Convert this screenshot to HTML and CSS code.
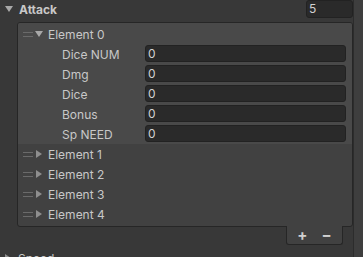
FILE: index.html
```html
<!DOCTYPE html>
<html>
<head>
    <title>Inspector</title>
    <link rel="stylesheet" href="styles.css">
</head>
<body>
    <div class="inspector">
        <div class="main">
            <div class="header">
                <svg class="tri" width="8" height="8" viewBox="0 0 8 8"><path d="M0 1 L8 1 L4 7 Z" fill="#a8a8a8"/></svg>
                <span class="title">Attack</span>
                <div class="field size">5</div>
            </div>

            <div class="list">
                <div class="item open">
                    <div class="elem">
                        <span class="handle"></span>
                        <svg class="tri" width="8" height="8" viewBox="0 0 8 8"><path d="M0 1 L8 1 L4 7 Z" fill="#a8a8a8"/></svg>
                        <span>Element 0</span>
                    </div>
                    <div class="prop"><span class="label">Dice NUM</span><div class="field">0</div></div>
                    <div class="prop"><span class="label">Dmg</span><div class="field">0</div></div>
                    <div class="prop"><span class="label">Dice</span><div class="field">0</div></div>
                    <div class="prop"><span class="label">Bonus</span><div class="field">0</div></div>
                    <div class="prop"><span class="label">Sp NEED</span><div class="field">0</div></div>
                </div>
                <div class="elem">
                    <span class="handle"></span>
                    <svg class="tri" width="8" height="8" viewBox="0 0 8 8"><path d="M1 0 L7 4 L1 8 Z" fill="#8e8e8e"/></svg>
                    <span>Element 1</span>
                </div>
                <div class="elem">
                    <span class="handle"></span>
                    <svg class="tri" width="8" height="8" viewBox="0 0 8 8"><path d="M1 0 L7 4 L1 8 Z" fill="#8e8e8e"/></svg>
                    <span>Element 2</span>
                </div>
                <div class="elem">
                    <span class="handle"></span>
                    <svg class="tri" width="8" height="8" viewBox="0 0 8 8"><path d="M1 0 L7 4 L1 8 Z" fill="#8e8e8e"/></svg>
                    <span>Element 3</span>
                </div>
                <div class="elem">
                    <span class="handle"></span>
                    <svg class="tri" width="8" height="8" viewBox="0 0 8 8"><path d="M1 0 L7 4 L1 8 Z" fill="#8e8e8e"/></svg>
                    <span>Element 4</span>
                </div>
            </div>
            <div class="footer">
                <span class="btn">+</span>
                <span class="btn minus">&minus;</span>
            </div>

            <div class="header next">
                <svg class="tri" width="8" height="8" viewBox="0 0 8 8"><path d="M1 0 L7 4 L1 8 Z" fill="#8e8e8e"/></svg>
                <span class="title">Speed</span>
            </div>
        </div>
        <div class="scrollbar"></div>
    </div>
</body>
</html>
```

FILE: styles.css
```css
body {
    margin: 0;
    padding: 0;
    background-color: #383838;
    font-family: Inter, "Noto Sans", sans-serif;
    font-size: 12px;
    color: #c8c8c8;
    overflow: hidden;
}

.inspector {
    display: flex;
    height: 257px;
    overflow: hidden;
}

.main {
    width: 353px;
    display: flex;
    flex-direction: column;
}

.scrollbar {
    width: 9px;
    border-left: 1px solid #2c2c2c;
    background-color: #3e3e3e;
}

.header {
    display: flex;
    align-items: center;
    height: 18px;
    padding-left: 5px;
    flex-shrink: 0;
}

.header .tri {
    margin-right: 6px;
}

.title {
    font-weight: bold;
    flex: 1;
}

.header.next {
    margin-top: 4px;
    padding-left: 4px;
}

.header.next .title {
    font-weight: normal;
}

.field {
    height: 15px;
    line-height: 15px;
    background-color: #2a2a2a;
    border: 1px solid #222;
    border-radius: 3px;
    padding-left: 2px;
    color: #d2d2d2;
    box-sizing: content-box;
}

.field.size {
    width: 43px;
    height: 16px;
    line-height: 16px;
    margin-bottom: 1px;
}

.list {
    margin-top: 4px;
    margin-left: 17px;
    border: 1px solid #262626;
    border-radius: 3px;
    background-color: #414141;
    padding-bottom: 2px;
    flex-shrink: 0;
}

.item.open {
    background-color: #494949;
    padding-top: 1px;
    border-radius: 2px 2px 0 0;
}

.elem {
    display: flex;
    align-items: center;
    height: 20px;
    padding-left: 5px;
}

.handle {
    width: 10px;
    height: 3px;
    border-top: 1px solid #6a6a6a;
    border-bottom: 1px solid #6a6a6a;
    margin-right: 2px;
}

.elem .tri {
    margin-right: 5px;
}

.prop {
    display: flex;
    align-items: center;
    height: 20px;
    padding-left: 44px;
    padding-right: 6px;
}

.prop .label {
    width: 83px;
}

.prop .field {
    flex: 1;
    margin-bottom: 2px;
}

.footer {
    align-self: flex-end;
    margin-right: 10px;
    margin-top: -1px;
    width: 55px;
    height: 18px;
    background-color: #414141;
    border: 1px solid #262626;
    border-top: none;
    border-radius: 0 0 3px 3px;
    display: flex;
    justify-content: center;
    gap: 14px;
    font-size: 15px;
    font-weight: bold;
    line-height: 17px;
    color: #d0d0d0;
    flex-shrink: 0;
}
```
